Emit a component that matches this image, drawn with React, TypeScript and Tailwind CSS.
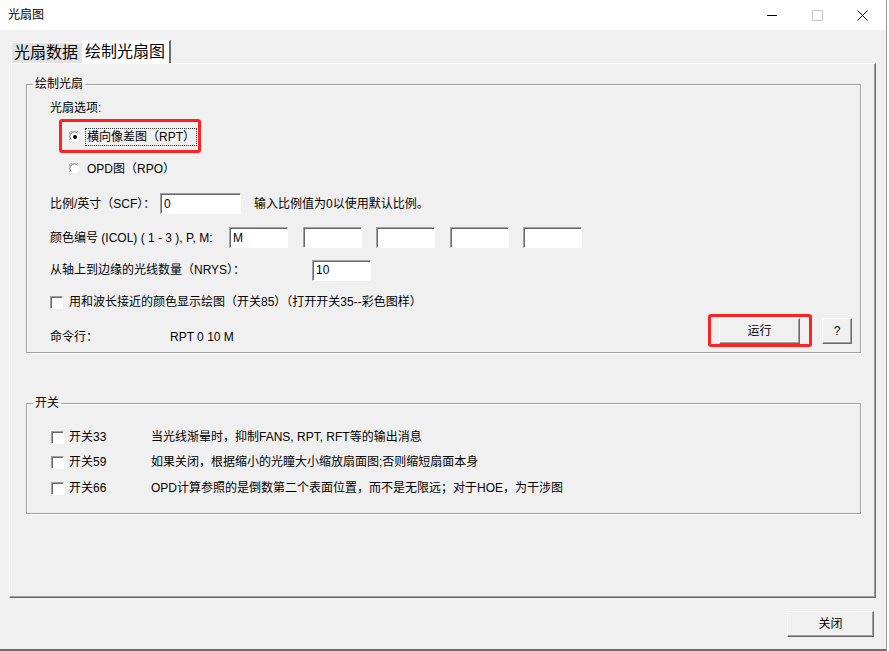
import React from "react";

const sunkenBox =
  "bg-white border border-t-[#a0a0a0] border-l-[#a0a0a0] border-r-[#ffffff] border-b-[#ffffff] shadow-[inset_1px_1px_0_#696969]";

const raisedBtn =
  "bg-[#f0f0f0] border border-t-[#ffffff] border-l-[#ffffff] border-r-[#696969] border-b-[#696969] shadow-[inset_-1px_-1px_0_#a0a0a0] text-[12px] leading-[16px] text-black flex items-center justify-center";

function Radio({ checked }: { checked?: boolean }) {
  return (
    <svg width="12" height="12" viewBox="0 0 12 12" className="shrink-0">
      <circle cx="6" cy="6" r="5.5" fill="#ffffff" />
      <path d="M1.1 9.5 A5.5 5.5 0 0 1 9.5 1.1" fill="none" stroke="#a0a0a0" strokeWidth="1" />
      <path d="M2.2 8.6 A4.3 4.3 0 0 1 8.6 2.2" fill="none" stroke="#696969" strokeWidth="1" />
      <path d="M9.5 1.1 A5.5 5.5 0 0 1 1.1 9.5" fill="none" stroke="#e3e3e3" strokeWidth="1" />
      {checked && <circle cx="6" cy="6" r="2" fill="#000000" />}
    </svg>
  );
}

function Check() {
  return <div className={`w-[13px] h-[13px] shrink-0 ${sunkenBox}`} />;
}

function Field({ value, w }: { value?: string; w: string }) {
  return (
    <input
      readOnly
      value={value ?? ""}
      className={`${w} h-[21px] pl-[3px] text-[12px] leading-[16px] text-black outline-none ${sunkenBox}`}
    />
  );
}

function Group({ title, className, children }: { title: string; className?: string; children: React.ReactNode }) {
  return (
    <fieldset
      className={`w-[835px] border border-[#a0a0a0] shadow-[inset_1px_1px_0_#ffffff,1px_1px_0_#ffffff] ${className ?? ""}`}
    >
      <legend className="ml-[6px] px-[2px] text-[12px] leading-[16px]">{title}</legend>
      {children}
    </fieldset>
  );
}

const switches = [
  { name: "开关33", desc: "当光线渐晕时，抑制FANS, RPT, RFT等的输出消息" },
  { name: "开关59", desc: "如果关闭，根据缩小的光瞳大小缩放扇面图;否则缩短扇面本身" },
  { name: "开关66", desc: "OPD计算参照的是倒数第二个表面位置，而不是无限远；对于HOE，为干涉图" },
];

export default function App() {
  return (
    <div className="w-[889px] h-[651px] flex bg-white text-black font-[family-name:'Liberation_Sans','Noto_Sans_CJK_SC',sans-serif]">
      <div className="w-[887px] h-[651px] flex flex-col border-r border-[#9a9a9a]">
        {/* title bar */}
        <div className="h-[30px] bg-white flex items-center pl-[8px] shrink-0">
          <span className="text-[12px] leading-[16px]">光扇图</span>
          <div className="ml-auto flex items-center h-full">
            <div className="w-[45px] h-full flex items-center justify-center">
              <svg width="11" height="11" viewBox="0 0 11 11">
                <path d="M0 5.5 H10" stroke="#000" strokeWidth="1" />
              </svg>
            </div>
            <div className="w-[45px] h-full flex items-center justify-center">
              <svg width="11" height="11" viewBox="0 0 11 11">
                <rect x="0.5" y="0.5" width="10" height="10" fill="none" stroke="#c8c8c8" strokeWidth="1" />
              </svg>
            </div>
            <div className="w-[45px] h-full flex items-center justify-center mr-[1px]">
              <svg width="11" height="11" viewBox="0 0 11 11">
                <path d="M0.5 0.5 L10.5 10.5 M10.5 0.5 L0.5 10.5" stroke="#000" strokeWidth="1" />
              </svg>
            </div>
          </div>
        </div>

        {/* body */}
        <div className="flex-1 bg-[#f0f0f0] flex flex-col pl-[9px] pt-[10px] border-b-2 border-[#6d6d6d]">
          {/* tabs */}
          <div className="flex items-end h-[23px]">
            <div className="ml-[2px] w-[71px] h-[21px] bg-[#e3e3e3] border-t border-l border-[#ffffff] flex items-center pl-[2px] text-[16px] leading-[20px]">
              光扇数据
            </div>
            <div className="w-[89px] h-[23px] bg-white border-t border-[#ffffff] border-r-2 border-r-[#6d6d6d] flex items-center pl-[3px] text-[16px] leading-[20px]">
              绘制光扇图
            </div>
          </div>

          {/* tab page */}
          <div className="w-[867px] h-[535px] border-t border-l border-[#ffffff] border-r border-b border-r-[#696969] border-b-[#696969] shadow-[inset_-1px_-1px_0_#a0a0a0] pt-[12px] pl-[16px]">
            <Group title="绘制光扇">
              <div className="pl-[23px] pr-[8px] pb-[8px]">
                <div className="mt-[8px] h-[16px] text-[12px] leading-[16px]">光扇选项:</div>

                <div className="relative mt-[11px] h-[20px] flex items-center text-[12px] leading-[16px]">
                  <div className="ml-[19px]">
                    <Radio checked />
                  </div>
                  <span className="ml-[4px] border border-dotted border-[#333] px-[1px]">横向像差图（RPT）</span>
                  <div className="absolute left-[9px] top-[-8px] w-[142px] h-[34px] border-[3px] border-[#ff2222] rounded-[3px]" />
                </div>

                <div className="mt-[12px] h-[20px] flex items-center text-[12px] leading-[16px]">
                  <div className="ml-[19px]">
                    <Radio />
                  </div>
                  <span className="ml-[5px] px-[1px]">OPD图（RPO）</span>
                </div>

                <div className="mt-[14px] h-[21px] flex items-center text-[12px] leading-[16px]">
                  <span className="w-[110px]">比例/英寸（SCF）：</span>
                  <Field value="0" w="w-[81px]" />
                  <span className="ml-[13px]">输入比例值为0以使用默认比例。</span>
                </div>

                <div className="mt-[13px] h-[21px] flex items-center text-[12px] leading-[16px]">
                  <span className="w-[179px]">颜色编号 (ICOL) ( 1 - 3 ), P, M:</span>
                  <Field value="M" w="w-[59px]" />
                  <div className="ml-[15px]">
                    <Field w="w-[59px]" />
                  </div>
                  <div className="ml-[14px]">
                    <Field w="w-[59px]" />
                  </div>
                  <div className="ml-[15px]">
                    <Field w="w-[59px]" />
                  </div>
                  <div className="ml-[14px]">
                    <Field w="w-[59px]" />
                  </div>
                </div>

                <div className="mt-[11px] h-[22px] flex items-center text-[12px] leading-[16px]">
                  <span className="w-[262px]">从轴上到边缘的光线数量（NRYS）：</span>
                  <Field value="10" w="w-[59px]" />
                </div>

                <div className="mt-[13px] h-[16px] flex items-center text-[12px] leading-[16px]">
                  <Check />
                  <span className="ml-[6px]">用和波长接近的颜色显示绘图（开关85）（打开开关35--彩色图样）</span>
                </div>

                <div className="mt-[8px] h-[26px] flex items-start text-[12px] leading-[16px]">
                  <span className="pt-[11px] w-[120px]">命令行：</span>
                  <span className="pt-[11px]">RPT 0 10 M</span>
                  <div className="ml-auto relative">
                    <div className={`w-[81px] h-[26px] ${raisedBtn}`}>运行</div>
                    <div className="absolute left-[-11px] top-[-4px] w-[104px] h-[33px] border-[3px] border-[#ff2222] rounded-[3px]" />
                  </div>
                  <div className={`ml-[22px] w-[30px] h-[26px] ${raisedBtn}`}>?</div>
                </div>
              </div>
            </Group>

            <Group title="开关" className="mt-[42px]">
              <div className="pl-[24px] pb-[15px]">
                {switches.map((s, i) => (
                  <div
                    key={s.name}
                    className={`h-[20px] flex items-center text-[12px] leading-[16px] ${i === 0 ? "mt-[16px]" : i === 1 ? "mt-[5px]" : "mt-[6px]"}`}
                  >
                    <Check />
                    <span className="ml-[5px] w-[82px]">{s.name}</span>
                    <span>{s.desc}</span>
                  </div>
                ))}
              </div>
            </Group>
          </div>

          {/* bottom buttons */}
          <div className="mt-[13px] pl-[778px]">
            <div className={`w-[87px] h-[26px] ${raisedBtn}`}>关闭</div>
          </div>
        </div>
      </div>
    </div>
  );
}
